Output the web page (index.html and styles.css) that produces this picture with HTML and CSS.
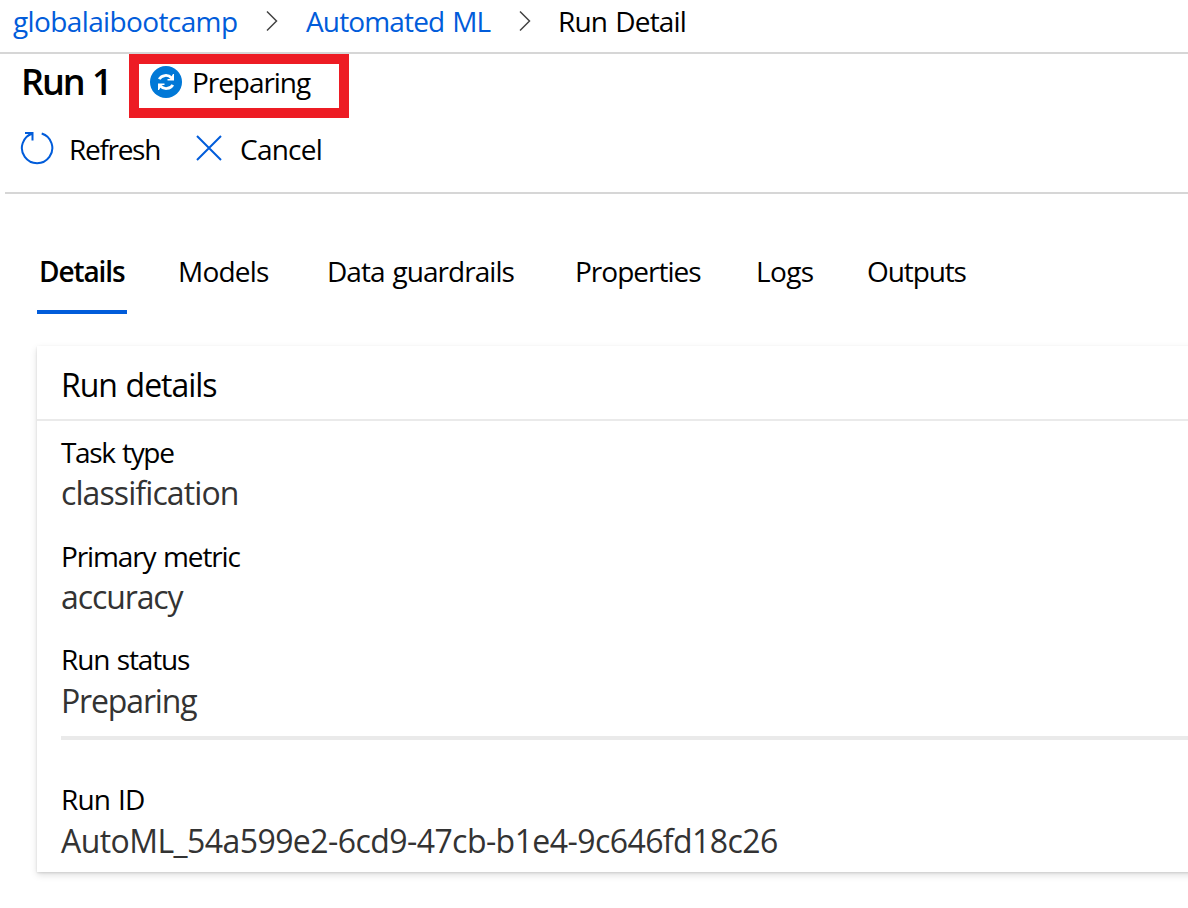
FILE: index.html
```html
<!DOCTYPE html>
<html lang="en">
<head>
<meta charset="utf-8">
<title>Run Detail</title>
<link rel="stylesheet" href="styles.css">
</head>
<body>
<nav class="breadcrumb">
  <a class="crumb crumb-workspace">globalaibootcamp</a>
  <svg class="chevron" width="12" height="22" viewBox="0 0 12 22"><path d="M1 1.500 10.500 11 1 20.500"/></svg>
  <a class="crumb crumb-section">Automated ML</a>
  <svg class="chevron" width="12" height="22" viewBox="0 0 12 22"><path d="M1 1.500 10.500 11 1 20.500"/></svg>
  <span class="crumb crumb-current">Run Detail</span>
</nav>
<header class="run-header">
  <h1 class="run-title">Run 1</h1>
  <div class="status-box">
    <svg class="status-icon" width="32" height="32" viewBox="0 0 32 32">
      <circle cx="16" cy="16" r="16"/>
      <path class="sync-arc" d="M9.200 13.200C11.500 9 18 8 21.500 12M22.800 18.800C20.500 23 14 24 10.500 20"/>
      <path class="sync-head" d="M24 8v6.500h-6.500v-1.500h2.500l3-5zM8 24v-6.500h6.500v1.500h-2.500l-3 5z"/>
    </svg>
    <span class="status-text">Preparing</span>
  </div>
</header>
<div class="toolbar">
  <button class="command command-refresh">
    <svg class="command-icon" width="34" height="34" viewBox="0 0 34 34"><path d="M21.700 2.500A15.200 15.200 0 1 1 12.500 2.500M5 2h7.500v7.500"/></svg>
    <span>Refresh</span>
  </button>
  <button class="command command-cancel">
    <svg class="command-icon" width="26" height="26" viewBox="0 0 26 26"><path d="M1 1 25 25M25 1 1 25"/></svg>
    <span>Cancel</span>
  </button>
</div>
<main class="content">
  <div class="tabs">
    <span class="tab tab-details">Details</span>
    <span class="tab tab-models">Models</span>
    <span class="tab tab-guardrails">Data guardrails</span>
    <span class="tab tab-properties">Properties</span>
    <span class="tab tab-logs">Logs</span>
    <span class="tab tab-outputs">Outputs</span>
  </div>
  <section class="card">
    <h2 class="card-title"><span>Run details</span></h2>
    <dl class="fields">
      <div class="field"><dt class="label label-task">Task type</dt><dd class="value value-task">classification</dd></div>
      <div class="field"><dt class="label label-metric">Primary metric</dt><dd class="value value-metric">accuracy</dd></div>
      <div class="field"><dt class="label label-status">Run status</dt><dd class="value value-status">Preparing</dd></div>
    </dl>
    <dl class="fields fields-id">
      <div class="field"><dt class="label label-id">Run ID</dt><dd class="value value-id">AutoML_54a599e2-6cd9-47cb-b1e4-9c646fd18c26</dd></div>
    </dl>
  </section>
</main>
</body>
</html>
```
FILE: styles.css
```css
* { box-sizing: border-box; }
body {
  margin: 0;
  width: 1188px;
  height: 908px;
  overflow: hidden;
  background: #fff;
  color: #000;
  font: 28px/40px "Open Sans", "Noto Sans", sans-serif;
  white-space: nowrap;
  word-spacing: 1.5px;
}
.breadcrumb {
  display: flex;
  height: 54px;
  padding: 1px 0 0 13px;
  border-bottom: 2px solid #d6d6d6;
}
.crumb { color: #015cda; }
.crumb-workspace { width: 253px; letter-spacing: -.62px; }
.crumb-section { width: 213px; margin-left: 28px; letter-spacing: -.85px; }
.crumb-current { margin-left: 27px; color: #000; letter-spacing: -.8px; }
.chevron { margin-top: 9px; fill: none; stroke: #444; stroke-width: 1.5; }
.run-header { display: flex; height: 64px; padding-left: 21px; }
.run-title {
  width: 108px;
  margin: 0;
  padding-top: 4px;
  font-size: 36px;
  line-height: 48px;
  font-weight: 600;
  letter-spacing: -2px;
  word-spacing: 1px;
}
.status-box {
  display: flex;
  width: 220px;
  height: 64px;
  padding-left: 11px;
  border: 10px solid #ed1c24;
}
.status-icon { margin-top: 2px; fill: #0078d7; }
.sync-arc { fill: none; stroke: #fff; stroke-width: 2.800; }
.sync-head { fill: #fff; }
.status-text { margin: -2px 0 0 10px; letter-spacing: -1.05px; }
.toolbar {
  display: flex;
  height: 76px;
  margin-left: 5px;
  padding: 11px 0 0 15px;
  border-bottom: 2px solid #d6d6d6;
}
.command {
  display: flex;
  height: 40px;
  padding: 0;
  border: 0;
  background: none;
  color: inherit;
  font: inherit;
}
.command-icon { flex: none; fill: none; stroke: #015cda; stroke-width: 2; }
.command-refresh { width: 175.5px; gap: 15px; letter-spacing: -1.3px; }
.command-refresh .command-icon { margin-top: 2px; }
.command-cancel { gap: 18.5px; letter-spacing: -.75px; }
.command-cancel .command-icon { margin-top: 6px; }
.content { padding: 57px 0 0 37px; }
.tabs { display: flex; height: 63px; }
.tab { height: 63px; padding-left: 2px; }
.tab-details { width: 90px; margin-right: 49px; border-bottom: 4px solid #015cda; font-weight: 600; letter-spacing: -1.1px; }
.tab-models { width: 149px; letter-spacing: -.8px; }
.tab-guardrails { width: 248px; letter-spacing: -.95px; }
.tab-properties { width: 181px; letter-spacing: -1px; }
.tab-logs { width: 111px; letter-spacing: -.6px; }
.tab-outputs { letter-spacing: -1.1px; }
.card {
  width: 1200px;
  height: 526px;
  margin-top: 32px;
  box-shadow: 0 3px 7px rgba(0,0,0,.13), 0 1px 2px rgba(0,0,0,.11);
}
.card-title {
  height: 75px;
  margin: 0;
  padding: 19px 0 0 24px;
  border-bottom: 2px solid #eaeaea;
  font-size: 32px;
  font-weight: 400;
  letter-spacing: -1.05px;
}
.fields { margin: 0 0 0 24px; padding-top: 11px; height: 319px; border-bottom: 4px solid #eaeaea; }
.fields-id { height: auto; padding-top: 39px; border: 0; }
.field { height: 104px; }
.label { height: 41px; }
.value { margin: 0; font-size: 32px; color: #333; }
.label-task { letter-spacing: -1.35px; }
.label-metric { letter-spacing: -1.13px; }
.label-status { margin-top: -1px; margin-bottom: 1px; letter-spacing: -1.15px; }
.label-id { height: 42px; letter-spacing: -.85px; }
.value-task { letter-spacing: -.9px; }
.value-metric { letter-spacing: -1.1px; }
.value-status { letter-spacing: -1.15px; }
.value-id { letter-spacing: -.57px; }
```
